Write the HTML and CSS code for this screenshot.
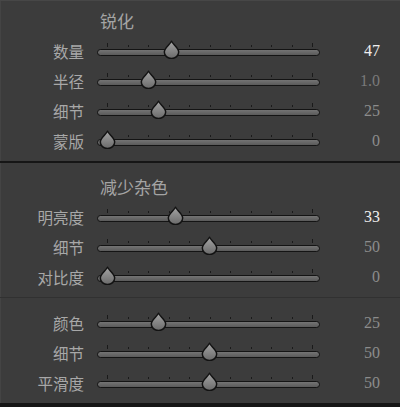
FILE: index.html
```html
<!DOCTYPE html>
<html lang="zh">
<head>
<meta charset="utf-8">
<link rel="stylesheet" href="styles.css">
</head>
<body>
<svg class="defs" width="0" height="0" aria-hidden="true">
  <defs>
    <linearGradient id="tg" x1="0" y1="0" x2="0" y2="1">
      <stop offset="0" stop-color="#a4a4a4"/>
      <stop offset="1" stop-color="#6a6a6a"/>
    </linearGradient>
    <symbol id="thumb" viewBox="0 0 16 18">
      <path d="M8 1.2 C9.6 4.2 14.8 7.6 14.8 11.4 A6.8 6.2 0 0 1 1.2 11.4 C1.2 7.6 6.4 4.2 8 1.2 Z" fill="url(#tg)" stroke="#121212" stroke-width="1.4" stroke-linejoin="round"/>
    </symbol>
  </defs>
</svg>
<div class="panel">
  <section class="sec sec-a">
    <div class="title">锐化</div>
    <div class="row"><div class="label">数量</div><div class="slider"><div class="ticks"><i class="t tall"></i><i class="t"></i><i class="t"></i><i class="t"></i><i class="t"></i><i class="t"></i><i class="t"></i><i class="t"></i><i class="t"></i><i class="t"></i><i class="t tall"></i></div><div class="track"></div><svg class="thumb" style="left:65.5px"><use href="#thumb"/></svg></div><div class="val hi">47</div></div>
    <div class="row"><div class="label">半径</div><div class="slider"><div class="ticks"><i class="t tall"></i><i class="t"></i><i class="t"></i><i class="t"></i><i class="t"></i><i class="t"></i><i class="t"></i><i class="t"></i><i class="t"></i><i class="t"></i><i class="t tall"></i></div><div class="track"></div><svg class="thumb" style="left:42.5px"><use href="#thumb"/></svg></div><div class="val dim">1.0</div></div>
    <div class="row"><div class="label">细节</div><div class="slider"><div class="ticks"><i class="t tall"></i><i class="t"></i><i class="t"></i><i class="t"></i><i class="t"></i><i class="t"></i><i class="t"></i><i class="t"></i><i class="t"></i><i class="t"></i><i class="t tall"></i></div><div class="track"></div><svg class="thumb" style="left:52.5px"><use href="#thumb"/></svg></div><div class="val">25</div></div>
    <div class="row"><div class="label">蒙版</div><div class="slider"><div class="ticks"><i class="t tall"></i><i class="t"></i><i class="t"></i><i class="t"></i><i class="t"></i><i class="t"></i><i class="t"></i><i class="t"></i><i class="t"></i><i class="t"></i><i class="t tall"></i></div><div class="track"></div><svg class="thumb" style="left:1.5px"><use href="#thumb"/></svg></div><div class="val">0</div></div>
  </section>
  <section class="sec sec-b">
    <div class="title">减少杂色</div>
    <div class="row"><div class="label">明亮度</div><div class="slider"><div class="ticks"><i class="t tall"></i><i class="t"></i><i class="t"></i><i class="t"></i><i class="t"></i><i class="t"></i><i class="t"></i><i class="t"></i><i class="t"></i><i class="t"></i><i class="t tall"></i></div><div class="track"></div><svg class="thumb" style="left:69.5px"><use href="#thumb"/></svg></div><div class="val hi">33</div></div>
    <div class="row"><div class="label">细节</div><div class="slider"><div class="ticks"><i class="t tall"></i><i class="t"></i><i class="t"></i><i class="t"></i><i class="t"></i><i class="t"></i><i class="t"></i><i class="t"></i><i class="t"></i><i class="t"></i><i class="t tall"></i></div><div class="track"></div><svg class="thumb" style="left:103.5px"><use href="#thumb"/></svg></div><div class="val">50</div></div>
    <div class="row"><div class="label">对比度</div><div class="slider"><div class="ticks"><i class="t tall"></i><i class="t"></i><i class="t"></i><i class="t"></i><i class="t"></i><i class="t"></i><i class="t"></i><i class="t"></i><i class="t"></i><i class="t"></i><i class="t tall"></i></div><div class="track"></div><svg class="thumb" style="left:1.5px"><use href="#thumb"/></svg></div><div class="val">0</div></div>
  </section>
  <section class="sec sec-c">
    <div class="row"><div class="label">颜色</div><div class="slider"><div class="ticks"><i class="t tall"></i><i class="t"></i><i class="t"></i><i class="t"></i><i class="t"></i><i class="t"></i><i class="t"></i><i class="t"></i><i class="t"></i><i class="t"></i><i class="t tall"></i></div><div class="track"></div><svg class="thumb" style="left:52.5px"><use href="#thumb"/></svg></div><div class="val">25</div></div>
    <div class="row"><div class="label">细节</div><div class="slider"><div class="ticks"><i class="t tall"></i><i class="t"></i><i class="t"></i><i class="t"></i><i class="t"></i><i class="t"></i><i class="t"></i><i class="t"></i><i class="t"></i><i class="t"></i><i class="t tall"></i></div><div class="track"></div><svg class="thumb" style="left:103.5px"><use href="#thumb"/></svg></div><div class="val">50</div></div>
    <div class="row"><div class="label">平滑度</div><div class="slider"><div class="ticks"><i class="t tall"></i><i class="t"></i><i class="t"></i><i class="t"></i><i class="t"></i><i class="t"></i><i class="t"></i><i class="t"></i><i class="t"></i><i class="t"></i><i class="t tall"></i></div><div class="track"></div><svg class="thumb" style="left:103.5px"><use href="#thumb"/></svg></div><div class="val">50</div></div>
  </section>
</div>
</body>
</html>
```
FILE: styles.css
```css
* { box-sizing: border-box; }
html, body { margin: 0; padding: 0; background: #3c3c3c; }
.defs { position: absolute; width: 0; height: 0; overflow: hidden; }
.panel {
  width: 400px;
  height: 407px;
  background: #3c3c3c;
  box-shadow: inset 0 1px 0 #474747, inset 1px 0 0 #444444;
  display: flex;
  flex-direction: column;
  font-family: "Noto Sans CJK SC", "Noto Sans", sans-serif;
  color: #a9a9a9;
}
.sec { display: flex; flex-direction: column; }
.sec-a { padding: 9px 0 5px; border-bottom: 2px solid #161616; }
.sec-b { padding: 12px 0 5px; border-bottom: 1px solid #313131; }
.sec-c { padding: 10px 0 5px; border-bottom: 4px solid #161616; }
.title {
  height: 24px;
  line-height: 24px;
  font-size: 17px;
  padding-left: 100px;
  margin-bottom: 3px;
  color: #a4a4a4;
}
.row { display: flex; height: 30px; align-items: stretch; }
.label {
  width: 84px;
  text-align: right;
  font-size: 15.5px;
  line-height: 30px;
  color: #a8a8a8;
}
.slider {
  position: relative;
  width: 224px;
  margin-left: 13px;
  display: flex;
  flex-direction: column;
}
.ticks {
  display: flex;
  justify-content: space-between;
  align-items: flex-end;
  height: 4px;
  margin: 7px 8px 1px 10px;
}
.t { display: block; width: 1px; height: 2px; background: #1a1a1a; }
.t.tall { height: 4px; }
.track {
  height: 7px;
  margin-top: 1px;
  margin-right: 1px;
  border: 1px solid #141414;
  border-radius: 3.5px;
  background: linear-gradient(#747474, #5a5a5a);
}
.thumb {
  position: absolute;
  top: 4px;
  width: 17px;
  height: 19px;
}
.val {
  width: 59px;
  text-align: right;
  font-family: "Liberation Serif", "DejaVu Serif", serif;
  font-size: 16px;
  line-height: 30px;
  color: #8c8c8c;
}
.val.hi { color: #efefef; }
.val.dim { color: #7a7a7a; }
```
